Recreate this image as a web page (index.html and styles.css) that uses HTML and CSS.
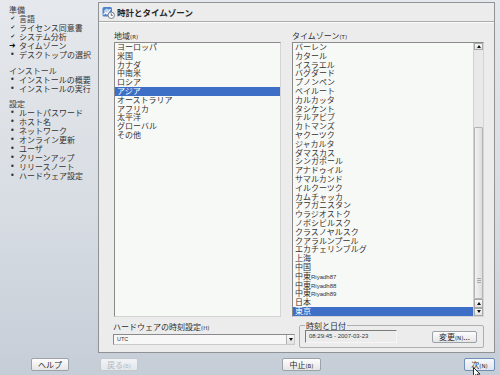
FILE: index.html
```html
<!DOCTYPE html>
<html lang="ja">
<head>
<meta charset="utf-8">
<title>時計とタイムゾーン</title>
<link rel="stylesheet" href="styles.css">
</head>
<body>
<div class="screen">
  <div class="main">
    <nav class="sidebar">
      <section class="step-group">
        <h2>準備</h2>
        <ul>
          <li class="done"><span class="mk">✔</span>言語</li>
          <li class="done"><span class="mk">✔</span>ライセンス同意書</li>
          <li class="done"><span class="mk">✔</span>システム分析</li>
          <li class="current"><span class="mk">➜</span>タイムゾーン</li>
          <li><span class="mk">•</span>デスクトップの選択</li>
        </ul>
      </section>
      <section class="step-group">
        <h2>インストール</h2>
        <ul>
          <li><span class="mk">•</span>インストールの概要</li>
          <li><span class="mk">•</span>インストールの実行</li>
        </ul>
      </section>
      <section class="step-group">
        <h2>設定</h2>
        <ul>
          <li><span class="mk">•</span>ルートパスワード</li>
          <li><span class="mk">•</span>ホスト名</li>
          <li><span class="mk">•</span>ネットワーク</li>
          <li><span class="mk">•</span>オンライン更新</li>
          <li><span class="mk">•</span>ユーザ</li>
          <li><span class="mk">•</span>クリーンアップ</li>
          <li><span class="mk">•</span>リリースノート</li>
          <li><span class="mk">•</span>ハードウェア設定</li>
        </ul>
      </section>
    </nav>

    <div class="panel">
      <div class="panel-head">
        <svg class="head-icon" width="13" height="13" viewBox="0 0 13 13">
          <rect x="0.5" y="1" width="9.5" height="9.5" rx="1.5" fill="#4f83cc"/>
          <path d="M2 4.5 L4.5 2.5 L7 3.5 L6.5 6 L4 7.5 L2.5 6.5Z" fill="#bcd6f2"/>
          <path d="M1.5 8.5 L3.5 6.5 L5 8 L8.5 3" stroke="#fff" stroke-width="1.2" fill="none"/>
          <circle cx="9.3" cy="9.3" r="3.2" fill="#fafafa" stroke="#5a6a80" stroke-width="0.8"/>
          <path d="M9.3 7.4 V9.4 H10.8" stroke="#333" stroke-width="0.7" fill="none"/>
        </svg>
        <span class="panel-title">時計とタイムゾーン</span>
      </div>
      <div class="panel-sep"></div>

      <div class="lists">
        <div class="col col-region">
          <div class="lbl">地域<span class="acc">(R)</span></div>
          <div class="listbox">
            <ul class="items">
              <li>ヨーロッパ</li>
              <li>米国</li>
              <li>カナダ</li>
              <li>中南米</li>
              <li>ロシア</li>
              <li class="sel">アジア</li>
              <li>オーストラリア</li>
              <li>アフリカ</li>
              <li>太平洋</li>
              <li>グローバル</li>
              <li>その他</li>
            </ul>
          </div>
        </div>
        <div class="col col-tz">
          <div class="lbl">タイムゾーン<span class="acc">(T)</span></div>
          <div class="listbox">
            <ul class="items">
              <li>バーレン</li>
              <li>カタール</li>
              <li>イスラエル</li>
              <li>バグダード</li>
              <li>プノンペン</li>
              <li>ベイルート</li>
              <li>カルカッタ</li>
              <li>タシケント</li>
              <li>テルアビブ</li>
              <li>カトマンズ</li>
              <li>ヤクーツク</li>
              <li>ジャカルタ</li>
              <li>ダマスカス</li>
              <li>シンガポール</li>
              <li>アナドゥイル</li>
              <li>サマルカンド</li>
              <li>イルクーツク</li>
              <li>カムチャッカ</li>
              <li>アフガニスタン</li>
              <li>ウラジオストク</li>
              <li>ノボシビルスク</li>
              <li>クラスノヤルスク</li>
              <li>クアラルンプール</li>
              <li>エカチェリンブルグ</li>
              <li>上海</li>
              <li>中国</li>
              <li>中東<span class="lat">Riyadh87</span></li>
              <li>中東<span class="lat">Riyadh88</span></li>
              <li>中東<span class="lat">Riyadh89</span></li>
              <li>日本</li>
              <li class="sel">東京</li>
            </ul>
            <div class="scrollbar">
              <div class="sb-btn"><span class="tri up"></span></div>
              <div class="sb-track"></div>
              <div class="sb-thumb"><span class="grip"></span></div>
              <div class="sb-btn sb-low"><span class="tri up"></span></div>
              <div class="sb-btn sb-low"><span class="tri down"></span></div>
            </div>
          </div>
        </div>
      </div>

      <div class="bottom">
        <div class="hw">
          <div class="lbl">ハードウェアの時刻設定<span class="acc">(H)</span></div>
          <div class="combo">
            <span class="combo-val">UTC</span>
            <span class="combo-btn"><span class="tri down"></span></span>
          </div>
        </div>
        <fieldset class="dt">
          <legend>時刻と日付</legend>
          <div class="dt-row">
            <div class="time-field">08:29:45 - 2007-03-23</div>
            <button class="btn btn-change">変更<span class="acc">(N)</span>...</button>
          </div>
        </fieldset>
      </div>
    </div>
  </div>

  <div class="footer">
    <button class="btn btn-help">ヘルプ</button>
    <button class="btn btn-back" disabled>戻る<span class="acc">(B)</span></button>
    <button class="btn btn-abort">中止<span class="acc">(B)</span></button>
    <button class="btn btn-next">次<span class="acc">(N)</span>
      <svg class="cursor" width="8" height="12" viewBox="0 0 8 12">
        <path d="M0.5 0.5 L0.5 9.5 L2.6 7.6 L4.2 11.2 L5.6 10.6 L4.1 7.1 L7 7.1 Z" fill="#fff" stroke="#000" stroke-width="0.8"/>
      </svg>
    </button>
  </div>
</div>
</body>
</html>
```

FILE: styles.css
```css
* { box-sizing: border-box; margin: 0; padding: 0; }
html, body { width: 500px; height: 375px; overflow: hidden; }
body {
  font-family: "Noto Sans CJK JP", "Noto Sans", sans-serif;
  font-size: 8px;
  line-height: 9px;
  color: #2e2e2e;
  background: linear-gradient(180deg, #e5e8ec 0%, #d8dde3 55%, #c5cdd7 100%);
}
ul { list-style: none; }

.screen { display: flex; flex-direction: column; height: 375px; }
.main { display: flex; height: 353px; }

/* sidebar */
.sidebar { width: 98px; flex: none; padding: 5px 0 0 9px; }
.step-group { margin-bottom: 6.5px; }
.step-group h2 { font-size: 8px; font-weight: normal; line-height: 9px; color: #3c3c3c; }
.step-group li { display: flex; line-height: 9px; height: 9px; color: #333; white-space: nowrap; }
.mk { width: 10px; flex: none; font-family: "DejaVu Sans", sans-serif; font-size: 8px; padding-left: 1px; }
.done .mk { font-size: 5.5px; color: #333; padding-left: 1.5px; }
.current .mk { font-size: 8px; color: #111; padding-left: 0; font-weight: bold; }
.current { color: #111; }

/* panel */
.panel {
  width: 397px; height: 351px; margin-top: 2px; flex: none;
  border: 1px solid #8f9396;
  background: #ececec;
  display: flex; flex-direction: column;
}
.panel-head { height: 18px; display: flex; align-items: center; padding-left: 3px; gap: 2px; }
.head-icon { flex: none; }
.panel-title { font-size: 8.5px; font-weight: bold; color: #262626; }
.panel-sep { height: 2px; border-top: 1px solid #aaaaaa; border-bottom: 1px solid #fbfbfb; }

.lists { display: flex; gap: 11px; padding: 8px 10px 0 15px; }
.col-region { width: 167px; }
.col-tz { width: 192px; }
.lbl { height: 9px; line-height: 9px; margin-bottom: 2px; color: #2e2e2e; white-space: nowrap; }
.acc { font-family: "DejaVu Sans", sans-serif; font-size: 5.5px; }

.listbox {
  height: 275px;
  border: 1px solid;
  border-color: #8a8a8a #d4d4d4 #d4d4d4 #8a8a8a;
  background: #f7f9f7;
  display: flex;
}
.items { flex: 1; min-width: 0; }
.items li { height: 8.8px; line-height: 8.8px; padding-left: 2px; white-space: nowrap; color: #333; }
.items li.sel { background: #3d6fc6; color: #fff; }
.lat { font-family: "Liberation Sans", sans-serif; font-size: 6px; }

.scrollbar { width: 10px; flex: none; display: flex; flex-direction: column; background: #e6e6e6; border-left: 1px solid #d0d0d0; }
.sb-btn { height: 7px; flex: none; display: flex; align-items: center; justify-content: center;
  background: linear-gradient(#fafafa, #e2e2e2); border: 1px solid #a8a8a8; }
.sb-low { height: 8.5px; }
.sb-track { height: 77px; flex: none; background: #e9e9e9; }
.sb-thumb { flex: 1; background: linear-gradient(90deg, #f2f2f2, #dedede); border: 1px solid #b4b4b4; border-radius: 1px;
  display: flex; align-items: flex-end; justify-content: center; padding-bottom: 14px; }
.grip { width: 4px; height: 6px; background: repeating-linear-gradient(#a9a9a9 0 1px, transparent 1px 2px); }
.tri { width: 0; height: 0; border-left: 2px solid transparent; border-right: 2px solid transparent; }
.tri.up { border-bottom: 3px solid #111; }
.tri.down { border-top: 3px solid #111; }

/* bottom */
.bottom { display: flex; padding-left: 14px; flex: 1; }
.hw { width: 182px; padding-top: 5px; }
.combo {
  margin-top: 3px; height: 11px; display: flex;
  border: 1px solid; border-color: #8a8a8a #c8c8c8 #c8c8c8 #8a8a8a;
  background: #f7f7f7;
}
.combo-val { flex: 1; font-family: "Liberation Sans", sans-serif; font-size: 5.5px; line-height: 9px; padding-left: 3px; color: #333; }
.combo-btn { width: 8px; display: flex; align-items: center; justify-content: center;
  background: linear-gradient(#fafafa, #e0e0e0); border-left: 1px solid #b0b0b0; }

.dt {
  margin-left: 4px; margin-top: 4px; width: 185px; height: 27px;
  border: 1px solid #b0b0b0; border-radius: 2px;
  padding: 0 6px 3px 5px;
}
.dt legend { padding: 0 1px; line-height: 9px; font-size: 8px; color: #2e2e2e; }
.dt-row { display: flex; justify-content: space-between; align-items: flex-end; }
.time-field {
  width: 92px; height: 13px;
  border: 1px solid; border-color: #7b7b7b #f6f6f6 #f6f6f6 #7b7b7b;
  background: #ececec;
  font-family: "Liberation Sans", sans-serif; font-size: 6px; line-height: 11px;
  padding-left: 3px; color: #333;
}

.btn {
  font-family: inherit; font-size: 8px; line-height: 11px; color: #2a2a2a;
  height: 13px; border: 1px solid #9ca2a8; border-radius: 2px;
  background: linear-gradient(#fdfdfd, #e6e6e6);
  white-space: nowrap; padding: 0;
}
.btn-change { width: 45px; height: 12px; line-height: 10px; }

.footer { height: 22px; display: flex; align-items: flex-start; padding: 5px 0 0 31px; }
.btn-help { width: 38px; }
.btn-back { width: 38px; margin-left: 31px; color: #b4b8bc; border-color: #c4c9ce; background: linear-gradient(#f2f4f6, #e3e7eb); }
.btn-abort { width: 39px; margin-left: 144px; }
.btn-next { width: 31px; margin-left: 143px; position: relative; border-color: #6f8db5; background: linear-gradient(#f6f9fc, #dfe6ee); }
.cursor { position: absolute; left: 8px; top: 8px; }
```
